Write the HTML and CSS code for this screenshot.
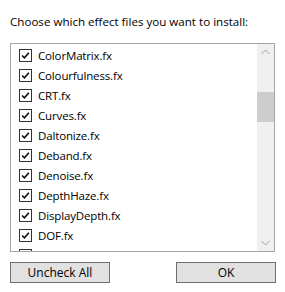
FILE: index.html
```html
<!DOCTYPE html>
<html lang="en">
<head>
    <meta charset="UTF-8">
    <title>Select Effects</title>
    <link rel="stylesheet" href="styles.css">
</head>
<body>
    <div class="dialog">
        <p class="prompt">Choose which effect files you want to install:</p>

        <div class="listbox">
            <div class="items">
                <label class="item"><span class="box"><svg viewBox="0 0 13 13"><path d="M2.5 6.5 L5.2 9.2 L10.5 3.2" /></svg></span>ColorMatrix.fx</label>
                <label class="item"><span class="box"><svg viewBox="0 0 13 13"><path d="M2.5 6.5 L5.2 9.2 L10.5 3.2" /></svg></span>Colourfulness.fx</label>
                <label class="item"><span class="box"><svg viewBox="0 0 13 13"><path d="M2.5 6.5 L5.2 9.2 L10.5 3.2" /></svg></span>CRT.fx</label>
                <label class="item"><span class="box"><svg viewBox="0 0 13 13"><path d="M2.5 6.5 L5.2 9.2 L10.5 3.2" /></svg></span>Curves.fx</label>
                <label class="item"><span class="box"><svg viewBox="0 0 13 13"><path d="M2.5 6.5 L5.2 9.2 L10.5 3.2" /></svg></span>Daltonize.fx</label>
                <label class="item"><span class="box"><svg viewBox="0 0 13 13"><path d="M2.5 6.5 L5.2 9.2 L10.5 3.2" /></svg></span>Deband.fx</label>
                <label class="item"><span class="box"><svg viewBox="0 0 13 13"><path d="M2.5 6.5 L5.2 9.2 L10.5 3.2" /></svg></span>Denoise.fx</label>
                <label class="item"><span class="box"><svg viewBox="0 0 13 13"><path d="M2.5 6.5 L5.2 9.2 L10.5 3.2" /></svg></span>DepthHaze.fx</label>
                <label class="item"><span class="box"><svg viewBox="0 0 13 13"><path d="M2.5 6.5 L5.2 9.2 L10.5 3.2" /></svg></span>DisplayDepth.fx</label>
                <label class="item"><span class="box"><svg viewBox="0 0 13 13"><path d="M2.5 6.5 L5.2 9.2 L10.5 3.2" /></svg></span>DOF.fx</label>
                <label class="item"><span class="box"><svg viewBox="0 0 13 13"><path d="M2.5 6.5 L5.2 9.2 L10.5 3.2" /></svg></span>DPX.fx</label>
            </div>
            <div class="scrollbar">
                <svg class="arrow" viewBox="0 0 17 17"><path d="M4.5 10 L8.5 6 L12.5 10" /></svg>
                <div class="track"><div class="thumb"></div></div>
                <svg class="arrow" viewBox="0 0 17 17"><path d="M4.5 7 L8.5 11 L12.5 7" /></svg>
            </div>
        </div>

        <div class="buttons">
            <button class="btn">Uncheck All</button>
            <button class="btn">OK</button>
        </div>
    </div>
</body>
</html>
```

FILE: styles.css
```css
body {
    margin: 0;
    background: #ffffff;
    font-family: "Segoe UI", "Open Sans", "Noto Sans", sans-serif;
    font-size: 11.5px;
    color: #000000;
}

.dialog {
    width: 285px;
    height: 292px;
    padding: 13px 10px 0 10px;
    box-sizing: border-box;
}

/* Top instruction line */
.prompt {
    margin: 0;
    height: 17px;
    line-height: 17px;
    font-size: 11.6px;
}

/* List of effect files */
.listbox {
    display: flex;
    margin-top: 13px;
    width: 265px;
    height: 209px;
    border: 1px solid #a5a5a5;
    box-sizing: border-box;
    overflow: hidden;
}

.items {
    flex: 1;
    padding: 1px 0 0 8px;
    letter-spacing: -0.15px;
}

.item {
    display: flex;
    align-items: center;
    height: 20px;
    white-space: nowrap;
}

.box {
    display: flex;
    width: 13px;
    height: 13px;
    margin-right: 6px;
    border: 1px solid #333333;
    box-sizing: border-box;
    background: #ffffff;
}

.box svg {
    width: 11px;
    height: 11px;
    fill: none;
    stroke: #111111;
    stroke-width: 2;
}

/* Vertical scroll bar */
.scrollbar {
    display: flex;
    flex-direction: column;
    width: 17px;
    background: #f0f0f0;
}

.arrow {
    width: 17px;
    height: 17px;
    fill: none;
    stroke: #a3a3a3;
    stroke-width: 1;
}

.track {
    flex: 1;
    padding-top: 31px;
}

.thumb {
    height: 30px;
    background: #cdcdcd;
}

/* Bottom buttons */
.buttons {
    display: flex;
    justify-content: space-between;
    margin-top: 10px;
    width: 266px;
}

.btn {
    width: 100px;
    height: 21px;
    padding: 0;
    font-family: inherit;
    font-size: 12px;
    color: #000000;
    background: #e1e1e1;
    border: 1px solid #6e6e6e;
}
```
